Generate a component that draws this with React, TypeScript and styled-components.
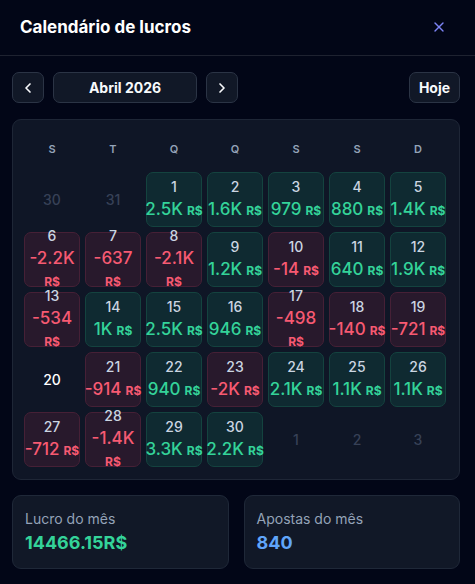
import styled, { createGlobalStyle } from 'styled-components';
import { X, ChevronLeft, ChevronRight } from 'lucide-react';

const GlobalStyle = createGlobalStyle`
  html, body {
    margin: 0;
    padding: 0;
    background: #020617;
  }
  body {
    font-family: 'Inter', 'Noto Sans', sans-serif;
    color: #f1f5f9;
  }
  * { box-sizing: border-box; }
`;

const Modal = styled.div`
  width: 475px;
  min-height: 584px;
  background: #020617;
`;

const Header = styled.header`
  height: 56px;
  display: flex;
  align-items: center;
  justify-content: space-between;
  padding: 0 28px 2px 20px;
  border-bottom: 1px solid #1e2230;
`;

const Title = styled.h1`
  margin: 0;
  font-size: 17px;
  font-weight: 700;
  color: #ffffff;
`;

const CloseButton = styled.button`
  background: none;
  border: none;
  padding: 0;
  display: flex;
  color: #7c83f5;
  cursor: pointer;
`;

const Body = styled.div`
  padding: 16px 15px 16px 12px;
  display: flex;
  flex-direction: column;
`;

const NavRow = styled.div`
  display: flex;
  align-items: center;
  gap: 9px;
  height: 31px;
  margin-bottom: 16px;
`;

const NavButton = styled.button<{ $wide?: boolean }>`
  height: 31px;
  width: ${(p) => (p.$wide ? '144px' : '32px')};
  display: flex;
  align-items: center;
  justify-content: center;
  background: #111827;
  border: 1px solid #2b3445;
  border-radius: 7px;
  color: #f8fafc;
  font-family: inherit;
  font-size: 14px;
  font-weight: 700;
  padding: 0;
`;

const TodayButton = styled(NavButton)`
  width: 51px;
  margin-left: auto;
`;

const Panel = styled.section`
  background: #0f1626;
  border: 1px solid #1e2636;
  border-radius: 9px;
  padding: 11px 11px 12px;
`;

const Grid = styled.div`
  display: grid;
  grid-template-columns: repeat(7, 56px);
  grid-template-rows: 36px;
  grid-auto-rows: 55px;
  gap: 5px;
`;

const WeekDay = styled.div`
  display: flex;
  align-items: center;
  justify-content: center;
  font-size: 11px;
  font-weight: 600;
  color: #94a3b8;
`;

const Cell = styled.div<{ $tone?: 'up' | 'down' }>`
  display: flex;
  flex-direction: column;
  align-items: center;
  justify-content: center;
  border-radius: 7px;
  border: 1px solid
    ${(p) => (p.$tone === 'up' ? '#14433f' : p.$tone === 'down' ? '#462036' : 'transparent')};
  background: ${(p) => (p.$tone === 'up' ? '#0f2a31' : p.$tone === 'down' ? '#28192c' : 'transparent')};
  color: ${(p) => (p.$tone === 'down' ? '#f75a72' : '#34d399')};
`;

const DayNum = styled.span<{ $muted?: boolean; $today?: boolean }>`
  font-size: 14px;
  line-height: 21px;
  font-weight: 500;
  color: ${(p) => (p.$muted ? '#374157' : p.$today ? '#ffffff' : '#cbd5e1')};
`;

const Amount = styled.span<{ $stack?: boolean }>`
  display: flex;
  flex-direction: ${(p) => (p.$stack ? 'column' : 'row')};
  align-items: ${(p) => (p.$stack ? 'center' : 'baseline')};
  gap: ${(p) => (p.$stack ? '0' : '4px')};
  font-size: 17px;
  line-height: 24px;
  font-weight: 500;
  white-space: nowrap;
`;

const Currency = styled.span`
  font-size: 12px;
  font-weight: 700;
`;

const Stats = styled.div`
  display: grid;
  grid-template-columns: 1fr 1fr;
  gap: 15px;
  margin-top: 15px;
`;

const StatCard = styled.div`
  height: 74px;
  background: #111827;
  border: 1px solid #1f2838;
  border-radius: 9px;
  padding: 13px 12px;
  display: flex;
  flex-direction: column;
  gap: 2px;
`;

const StatLabel = styled.span`
  font-size: 14px;
  color: #94a3b8;
  line-height: 20px;
`;

const StatValue = styled.span<{ $color: string }>`
  font-size: 18px;
  font-weight: 700;
  line-height: 24px;
  color: ${(p) => p.$color};
`;

type Day =
  | { kind: 'out'; n: number }
  | { kind: 'today'; n: number }
  | { kind: 'val'; n: number; v: string; stack?: boolean };

const out = (n: number): Day => ({ kind: 'out', n });
const val = (n: number, v: string, stack = false): Day => ({ kind: 'val', n, v, stack });

const days: Day[] = [
  out(30), out(31), val(1, '2.5K'), val(2, '1.6K'), val(3, '979'), val(4, '880'), val(5, '1.4K'),
  val(6, '-2.2K', true), val(7, '-637', true), val(8, '-2.1K', true), val(9, '1.2K'), val(10, '-14'), val(11, '640'), val(12, '1.9K'),
  val(13, '-534', true), val(14, '1K'), val(15, '2.5K'), val(16, '946'), val(17, '-498', true), val(18, '-140'), val(19, '-721'),
  { kind: 'today', n: 20 }, val(21, '-914'), val(22, '940'), val(23, '-2K'), val(24, '2.1K'), val(25, '1.1K'), val(26, '1.1K'),
  val(27, '-712'), val(28, '-1.4K', true), val(29, '3.3K'), val(30, '2.2K'), out(1), out(2), out(3),
];

const weekDays = ['S', 'T', 'Q', 'Q', 'S', 'S', 'D'];

export default function App() {
  return (
    <>
      <GlobalStyle />
      <Modal>
        <Header>
          <Title>Calendário de lucros</Title>
          <CloseButton aria-label="Fechar">
            <X size={16} strokeWidth={2} />
          </CloseButton>
        </Header>
        <Body>
          <NavRow>
            <NavButton aria-label="Mês anterior">
              <ChevronLeft size={16} strokeWidth={2.5} />
            </NavButton>
            <NavButton $wide>Abril 2026</NavButton>
            <NavButton aria-label="Próximo mês">
              <ChevronRight size={16} strokeWidth={2.5} />
            </NavButton>
            <TodayButton>Hoje</TodayButton>
          </NavRow>

          <Panel>
            <Grid>
              {weekDays.map((d, i) => (
                <WeekDay key={i}>{d}</WeekDay>
              ))}
              {days.map((d, i) => {
                if (d.kind === 'out') {
                  return (
                    <Cell key={i}>
                      <DayNum $muted>{d.n}</DayNum>
                    </Cell>
                  );
                }
                if (d.kind === 'today') {
                  return (
                    <Cell key={i}>
                      <DayNum $today>{d.n}</DayNum>
                    </Cell>
                  );
                }
                const tone = d.v.startsWith('-') ? 'down' : 'up';
                return (
                  <Cell key={i} $tone={tone}>
                    <DayNum>{d.n}</DayNum>
                    <Amount $stack={d.stack}>
                      {d.v}
                      <Currency>R$</Currency>
                    </Amount>
                  </Cell>
                );
              })}
            </Grid>
          </Panel>

          <Stats>
            <StatCard>
              <StatLabel>Lucro do mês</StatLabel>
              <StatValue $color="#34d399">14466.15R$</StatValue>
            </StatCard>
            <StatCard>
              <StatLabel>Apostas do mês</StatLabel>
              <StatValue $color="#60a5fa">840</StatValue>
            </StatCard>
          </Stats>
        </Body>
      </Modal>
    </>
  );
}
